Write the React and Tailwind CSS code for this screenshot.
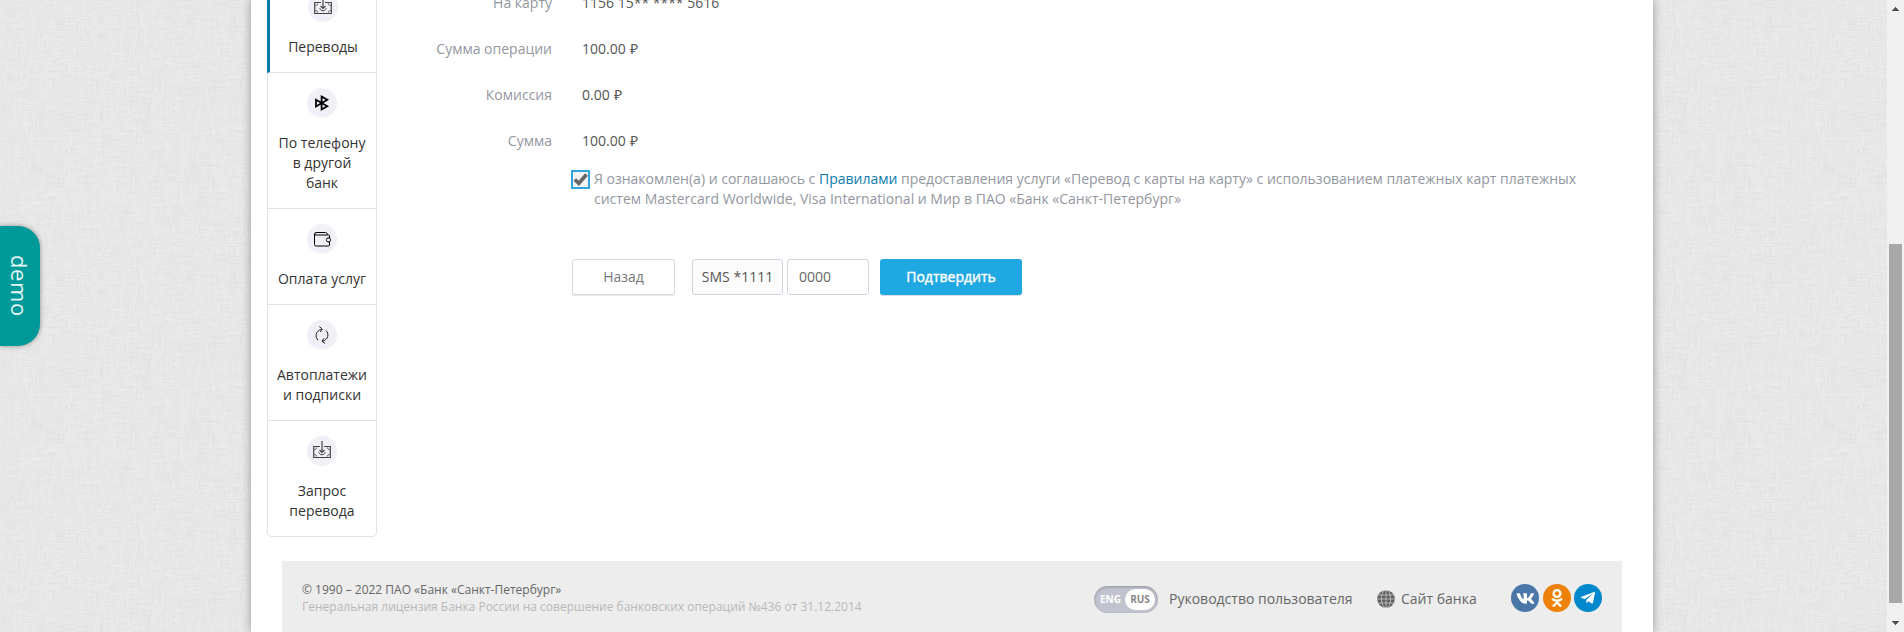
import React from "react";
import { FaVk, FaOdnoklassniki, FaTelegramPlane } from "react-icons/fa";

// Deterministic woven texture: short horizontal and vertical threads on a tile.
function threads(seed, count, size) {
  let s = seed;
  const next = () => {
    s = (s * 1664525 + 1013904223) % 4294967296;
    return s / 4294967296;
  };
  let d = "";
  for (let i = 0; i < count; i++) {
    const x = Math.floor(next() * size);
    const y = Math.floor(next() * size);
    const len = 2 + Math.floor(next() * 13);
    d += next() > 0.5 ? `M${x} ${y}h${len}v1h-${len}z` : `M${x} ${y}h1v${len}h-1z`;
  }
  return d;
}
const DARK = threads(7, 2600, 256);
const LIGHT = threads(91, 2600, 256);

function Texture() {
  return (
    <svg className="absolute inset-0 h-full w-full" aria-hidden="true">
      <defs>
        <pattern id="weave" width="256" height="256" patternUnits="userSpaceOnUse">
          <rect width="256" height="256" fill="#e7e7e7" />
          <path d={DARK} fill="#e3e3e3" />
          <path d={LIGHT} fill="#eaeaea" />
        </pattern>
      </defs>
      <rect width="100%" height="100%" fill="url(#weave)" />
    </svg>
  );
}

function BanknoteIcon() {
  return (
    <svg className="-mt-[3px]" width="18" height="19" viewBox="0 0 18 19" fill="none" stroke="#444" strokeWidth="1">
      <path d="M7 6.500H.7v11h16.600v-11H11" strokeWidth="1.200" />
      <path d="M9 1v11M6.500 10 9 12.400l2.500-2.400" strokeWidth="1.200" />
      <path d="M1.500 9.500c1.400-.2 2-.8 2.200-2M16.500 9.500c-1.400-.2-2-.8-2.200-2M1.500 14.500c1.400.2 2 .9 2.200 2M16.500 14.500c-1.400.2-2 .9-2.200 2" />
      <path d="M5.800 12.200c.4 1.700 1.700 2.600 3.200 2.600s2.800-.9 3.200-2.600" />
    </svg>
  );
}

function FastPayIcon() {
  return (
    <svg width="16" height="18" viewBox="0 0 16 18" fill="none" stroke="#000" strokeWidth="1.800">
      <path d="M7.600 2.500v13L13.300 12.300 2 5.800v6.600L13.300 5.700z" />
    </svg>
  );
}

function WalletIcon() {
  return (
    <svg width="17" height="15" viewBox="0 0 17 15" fill="none" stroke="#000" strokeWidth="1">
      <path d="M15.500 6V4q0-1-1-1H2Q.5 3 .5 2T2 .5h9.500q1.500 0 2 2M.5 1.500v11q0 1.500 1.500 1.500h12.500q1 0 1-1V9.800" />
      <rect x="12.500" y="6" width="4" height="3.800" rx="1.500" />
    </svg>
  );
}

function RepeatIcon() {
  return (
    <svg width="14" height="18" viewBox="0 0 14 18" fill="none" stroke="#222" strokeWidth="1">
      <path d="M3 14.200C.2 11.500-.2 5 6.800 3.200M4.300.6l3 2.400-2 3" />
      <path d="M11 4.500c3 2.900 3 9.300-3.800 10.800M10 17.400l-3-2.200 2-3" />
    </svg>
  );
}

const GlobeIcon = () => (
  <svg width="18" height="18" viewBox="0 0 18 18">
    <circle cx="9" cy="9" r="8.800" fill="#5f5f5f" />
    <g fill="none" stroke="#ccc" strokeWidth=".8">
      <path d="M0 5h18M0 9h18M0 13h18M9 0v18" />
      <ellipse cx="9" cy="9" rx="4.600" ry="9" />
    </g>
  </svg>
);

function MenuItem({ icon, lines, active }) {
  return (
    <div
      className={
        active
          ? "-ml-px flex flex-col items-center border-b border-l-3 border-b-[#e2e2e4] border-l-[#0a7bae] pt-[15px] pb-[15px]"
          : "flex flex-col items-center border-b border-[#e2e2e4] pt-[15px] pb-[15px] last:border-b-0"
      }
    >
      <div className="flex h-[30px] w-[30px] items-center justify-center rounded-full bg-[#f0f1f6]">{icon}</div>
      <div className="mt-[15px] text-center text-sm leading-5 text-[#333]">
        {lines.map((l) => (
          <div key={l}>{l}</div>
        ))}
      </div>
    </div>
  );
}

const rows = [
  ["На карту", "1156 15** **** 5616"],
  ["Сумма операции", "100.00", true],
  ["Комиссия", "0.00", true],
  ["Сумма", "100.00", true],
];

function Form() {
  return (
    <div className="-mt-5 flex-1">
      {rows.map(([label, value, money]) => (
        <div key={label} className="flex h-[46px] items-center text-sm">
          <div className="w-[175px] text-right text-[#93979f]">{label}</div>
          <div className="ml-[30px] text-[#555]">
            {value}
            {money && <span className="ml-px"> ₽</span>}
          </div>
        </div>
      ))}
      <div className="mt-[6px] ml-[194px] flex">
        <div className="flex h-[19px] w-[19px] shrink-0 items-center justify-center border-2 border-[#2fa4de] bg-[#f3f3f3]">
          <svg width="15" height="15" viewBox="0 0 15 15" fill="none" stroke="#666" strokeWidth="3.600">
            <path d="M1.800 7.500 5.800 11.300 13.500 2.500" />
          </svg>
        </div>
        <p className="-mt-px ml-1 text-sm leading-5 whitespace-nowrap text-[#93979f]">
          Я ознакомлен(а) и соглашаюсь с <span className="text-[#0a7bae]">Правилами</span> предоставления услуги «Перевод
          с карты на карту» с использованием платежных карт платежных
          <br />
          систем Mastercard Worldwide, Visa International и Мир в ПАО «Банк «Санкт-Петербург»
        </p>
      </div>
      <div className="mt-[50px] ml-[195px] flex h-9 text-sm">
        <button className="w-[103px] rounded-[3px] border border-[#d8d9dd] bg-white text-[#777] shadow-[0_1px_1px_rgba(0,0,0,0.1)]">
          Назад
        </button>
        <div className="ml-[17px] flex w-[91px] items-center justify-center rounded-[3px] border border-[#d0d4e0] bg-[#fcfcfc] text-[#555]">
          SMS *1111
        </div>
        <div className="ml-1 flex w-[82px] items-center rounded-[3px] border border-[#d0d4e0] bg-white pl-[11px] text-[#666]">
          0000
        </div>
        <button className="ml-[11px] w-[142px] rounded-[3px] bg-[#20a8e2] text-white shadow-[0_1px_1px_rgba(0,0,0,0.15)] [-webkit-text-stroke:0.4px_white]">
          Подтвердить
        </button>
      </div>
    </div>
  );
}

function Footer() {
  return (
    <footer className="mt-6 ml-[31px] flex h-[71px] w-[1340px] bg-[#ededed] pl-5">
      <div className="w-[792px] pt-5 text-xs leading-[17px]">
        <div className="text-[#666]">© 1990 – 2022 ПАО «Банк «Санкт-Петербург»</div>
        <div className="text-[#b8b8b8]">Генеральная лицензия Банка России на совершение банковских операций №436 от 31.12.2014</div>
      </div>
      <div className="flex h-[76px] items-center text-sm text-[#666]">
        <div className="flex h-[27px] w-16 items-center justify-between rounded-full bg-[#c1c4ce] pr-[3px] pl-[6px] text-[10px] font-bold shadow-[inset_0_1px_3px_rgba(0,0,0,0.25)]">
          <span className="text-white">ENG</span>
          <span className="flex h-[21px] w-[30px] items-center justify-center rounded-full bg-white text-[#888]">RUS</span>
        </div>
        <span className="ml-[11px] w-[208px]">Руководство пользователя</span>
        <GlobeIcon />
        <span className="ml-[6px] w-[110px]">Сайт банка</span>
        <div className="mb-[2px] flex gap-[3.500px] text-white">
          <span className="flex h-7 w-7 items-center justify-center rounded-full bg-[#4a76a8]">
            <FaVk size={19} />
          </span>
          <span className="flex h-7 w-7 items-center justify-center rounded-full bg-[#ee8208]">
            <FaOdnoklassniki size={18} />
          </span>
          <span className="flex h-7 w-7 items-center justify-center rounded-full bg-[#0088cc]">
            <FaTelegramPlane size={16} />
          </span>
        </div>
      </div>
    </footer>
  );
}

export default function App() {
  return (
    <div className="relative flex h-[632px] w-[1904px] overflow-hidden font-['Open_Sans',sans-serif]">
      <Texture />
      <main className="relative ml-[251px] h-[632px] w-[1402px] shrink-0 bg-white shadow-[0_0_9px_rgba(0,0,0,0.35)]">
        <div className="flex h-[537px]">
          <nav className="-mt-[23px] ml-4 h-[560px] w-[110px] shrink-0 rounded-b-[5px] border border-t-0 border-[#e2e2e4]">
            <MenuItem active icon={<BanknoteIcon />} lines={["Переводы"]} />
            <MenuItem icon={<FastPayIcon />} lines={["По телефону", "в другой", "банк"]} />
            <MenuItem icon={<WalletIcon />} lines={["Оплата услуг"]} />
            <MenuItem icon={<RepeatIcon />} lines={["Автоплатежи", "и подписки"]} />
            <MenuItem icon={<BanknoteIcon />} lines={["Запрос", "перевода"]} />
          </nav>
          <Form />
        </div>
        <Footer />
      </main>
      <div className="relative ml-[234px] flex w-[17px] flex-col items-center justify-between bg-[#f1f1f1]">
        <svg width="17" height="17" viewBox="0 0 17 17" fill="#505050">
          <path d="M5 11h7v-1h-1v-1h-1V8H9V7H8v1H7v1H6v1H5z" />
        </svg>
        <div className="mt-auto mb-[12px] h-[359px] w-[13px] bg-[#a8a8a8]" />
        <svg width="17" height="17" viewBox="0 0 17 17" fill="#505050">
          <path d="M5 6h7v1h-1v1h-1v1H9v1H8V9H7V8H6V7H5z" />
        </svg>
      </div>
      <div className="absolute top-[226px] left-0 flex h-[120px] w-10 items-center justify-center rounded-r-[22px] bg-[#009999] shadow-[0_0_5px_rgba(0,0,0,0.4)]">
        <span className="text-[22px] leading-10 tracking-[0.6px] text-[#e3f4f4] [writing-mode:vertical-rl]">demo</span>
      </div>
    </div>
  );
}
